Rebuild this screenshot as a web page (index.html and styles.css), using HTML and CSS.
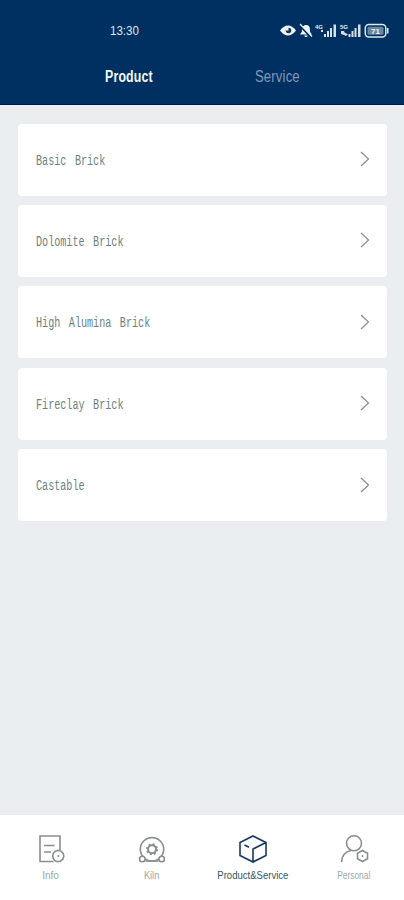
FILE: index.html
```
<!DOCTYPE html>
<html lang="en">
<head>
<meta charset="utf-8">
<title>Product</title>
<link rel="stylesheet" href="styles.css">
</head>
<body>
<header class="header">
  <div class="status">
    <span class="clock">13:30</span>
    <svg class="status-icons" width="110" height="18" viewBox="280 22 110 18">
      <path d="M280 30.500Q288 20.500 296 30.500Q288 40.500 280 30.500Z" fill="#f2f7f8"/>
      <circle cx="288.500" cy="30.500" r="2.800" fill="#12365f"/><path d="M288.500 27.500v3h-3a3 3 0 0 1 3-3Z" fill="#f2f7f8"/>
      <path d="M300 34.500l2-3V29q1-4 4-4 4 0 4 5v2l2 2.500ZM304 35.500h4q-2 3-4 0Z" fill="#f2f7f8"/>
      <path d="M299 24.500L311 37" stroke="#002e60" stroke-width="2.500"/><path d="M300 24L312 36.500" stroke="#f2f7f8" stroke-width="1.200"/>
      <g fill="#d5e0e6">
        <path d="M321 30h2v2h-2zM324 34h2v3h-2zM327 31h2v6h-2zM330 28h2v9h-2zM333.500 24.500h2.500v12.500h-2.500z"/>
        <path d="M348.500 34h2v3h-2zM351.500 31h2v6h-2zM354.500 28h2v9h-2zM358 24.500h2.500v12.500H358z"/>
        <path d="M341 31h3l1 2 3 1-2 2-2-1-3-1z"/>
      </g>
      <text x="315" y="29" class="net">4G</text><text x="340" y="29" class="net">5G</text>
      <rect x="365.300" y="24.500" width="20.500" height="12.500" rx="3.500" fill="none" stroke="#dce8ed" stroke-width="1.500"/>
      <rect x="367.500" y="26.800" width="16" height="8" rx="1.500" fill="#6886a0"/>
      <path d="M387 28h1.500v5.500H387z" fill="#dce8ed"/>
      <text x="371" y="33.700" class="charge">71</text>
    </svg>
  </div>
  <nav class="tabs">
    <span class="tab tab-active"><b>Product</b></span>
    <span class="tab"><b>Service</b></span>
  </nav>
</header>
<main class="list">
  <div class="card"><span class="name">Basic Brick</span><svg class="chevron" viewBox="0 0 10 16"><path d="M1 1l7.500 7L1 15"/></svg></div>
  <div class="card"><span class="name">Dolomite Brick</span><svg class="chevron" viewBox="0 0 10 16"><path d="M1 1l7.500 7L1 15"/></svg></div>
  <div class="card"><span class="name">High Alumina Brick</span><svg class="chevron" viewBox="0 0 10 16"><path d="M1 1l7.500 7L1 15"/></svg></div>
  <div class="card"><span class="name">Fireclay Brick</span><svg class="chevron" viewBox="0 0 10 16"><path d="M1 1l7.500 7L1 15"/></svg></div>
  <div class="card"><span class="name">Castable</span><svg class="chevron" viewBox="0 0 10 16"><path d="M1 1l7.500 7L1 15"/></svg></div>
</main>
<footer class="nav">
  <div class="item">
    <svg class="icon" viewBox="0 0 31 31"><path d="M18.500 27.500H5V2h20v14M9 11.500h10.500M9 18h7"/><path d="M20.500 17.200l2.500-.9 3 .9 2.200 2.300.6 2.700-1 3-2.300 2-2.500.5-3-1-1.800-2.200-.5-2.800.8-2.700Z"/><circle class="dot" cx="23.300" cy="22" r="1.100"/></svg>
    <span class="label info">Info</span>
  </div>
  <div class="item">
    <svg class="icon" viewBox="0 0 31 31"><circle cx="16" cy="15.300" r="11.700"/><path d="M9.500 27h13"/><circle cx="16" cy="15.300" r="4" stroke-width="2"/><circle cx="16" cy="15.300" r="5.200" stroke-dasharray="2 2.080"/><circle class="wheel" cx="6.300" cy="25" r="2.800"/><circle class="wheel" cx="25.700" cy="25" r="2.800"/></svg>
    <span class="label kiln">Kiln</span>
  </div>
  <div class="item item-active">
    <svg class="icon" viewBox="0 0 31 31"><path d="M16 2L29 8.500v13L16 28 3 21.500v-13ZM29 8.500L16 15v13M7.500 11l4.500 2.300"/></svg>
    <span class="label service">Product&amp;Service</span>
  </div>
  <div class="item">
    <svg class="icon" viewBox="0 0 31 31"><circle cx="16" cy="9.300" r="7.500"/><path d="M3.500 28q.5-9.500 9.500-11.500M24.500 16.500l5 2.800v5.400l-5 2.800-5-2.800v-5.400Z"/><circle class="dot" cx="24.500" cy="22" r="1"/></svg>
    <span class="label personal">Personal</span>
  </div>
</footer>
</body>
</html>
```
FILE: styles.css
```
* { box-sizing: border-box; }
body {
  margin: 0;
  height: 900px;
  display: flex;
  flex-direction: column;
  background: #eaeef1;
  font-family: "Liberation Sans", sans-serif;
  overflow: hidden;
}
.header {
  height: 105px;
  flex: none;
  background: #003061;
  border-bottom: 1px solid #00184b;
}
.status {
  height: 60px;
  padding: 1px 14px 0 110px;
  display: flex;
  align-items: center;
  justify-content: space-between;
}
.clock {
  width: 29px;
  white-space: nowrap;
  font-size: 13px;
  color: #dce7ed;
  transform: scaleX(.89);
  transform-origin: left;
}
.net { font-size: 6px; font-weight: bold; fill: #e4ecef; }
.charge { font-size: 8px; font-weight: bold; fill: #e4f4fa; }
.tabs {
  display: flex;
  padding: 0 52px 0 54px;
  height: 34px;
}
.tab {
  flex: 1;
  display: flex;
  align-items: center;
  justify-content: center;
  font-size: 16px;
  color: #8099b9;
}
.tab b { font-weight: normal; transform: scaleX(.82); letter-spacing: .2px; }
.tab-active { color: #f3f7f8; }
.tab-active b { font-weight: bold; transform: scaleX(.77); }
.list {
  flex: 1;
  display: flex;
  flex-direction: column;
  gap: 9.200px;
  padding: 18.500px 17px 0 18px;
}
.card {
  height: 72.200px;
  padding: 0 17.500px 0 18px;
  display: flex;
  align-items: center;
  justify-content: space-between;
  border-radius: 4px;
  background: #fff;
}
.name {
  font-family: "Liberation Mono", monospace;
  font-size: 14.500px;
  color: #6b8282;
  white-space: nowrap;
  word-spacing: 3.500px;
  transform: translateY(.5px) scaleX(.698);
  transform-origin: left;
}
.chevron {
  width: 10px;
  height: 16px;
  margin-bottom: 1px;
  fill: none;
  stroke: #8d9191;
  stroke-width: 1.300;
}
.nav {
  flex: none;
  height: 85px;
  padding-top: 18.500px;
  display: grid;
  grid-template-columns: repeat(4, 1fr);
  background: #fff;
}
.item {
  display: flex;
  flex-direction: column;
  align-items: center;
  color: #8b8e8f;
}
.item-active { color: #173963; }
.icon {
  width: 31px;
  height: 31px;
  fill: none;
  stroke: currentColor;
  stroke-width: 1.600;
}
.dot { fill: currentColor; stroke: none; }
.wheel { fill: #fff; }
.label {
  margin-top: 2.500px;
  font-size: 11.500px;
  line-height: 16px;
  white-space: nowrap;
  color: #98a8aa;
}
.info { transform: scaleX(.87); }
.kiln { transform: scaleX(.8); }
.personal { transform: scaleX(.73); }
.service { color: #315763; transform: scaleX(.83); }
```
